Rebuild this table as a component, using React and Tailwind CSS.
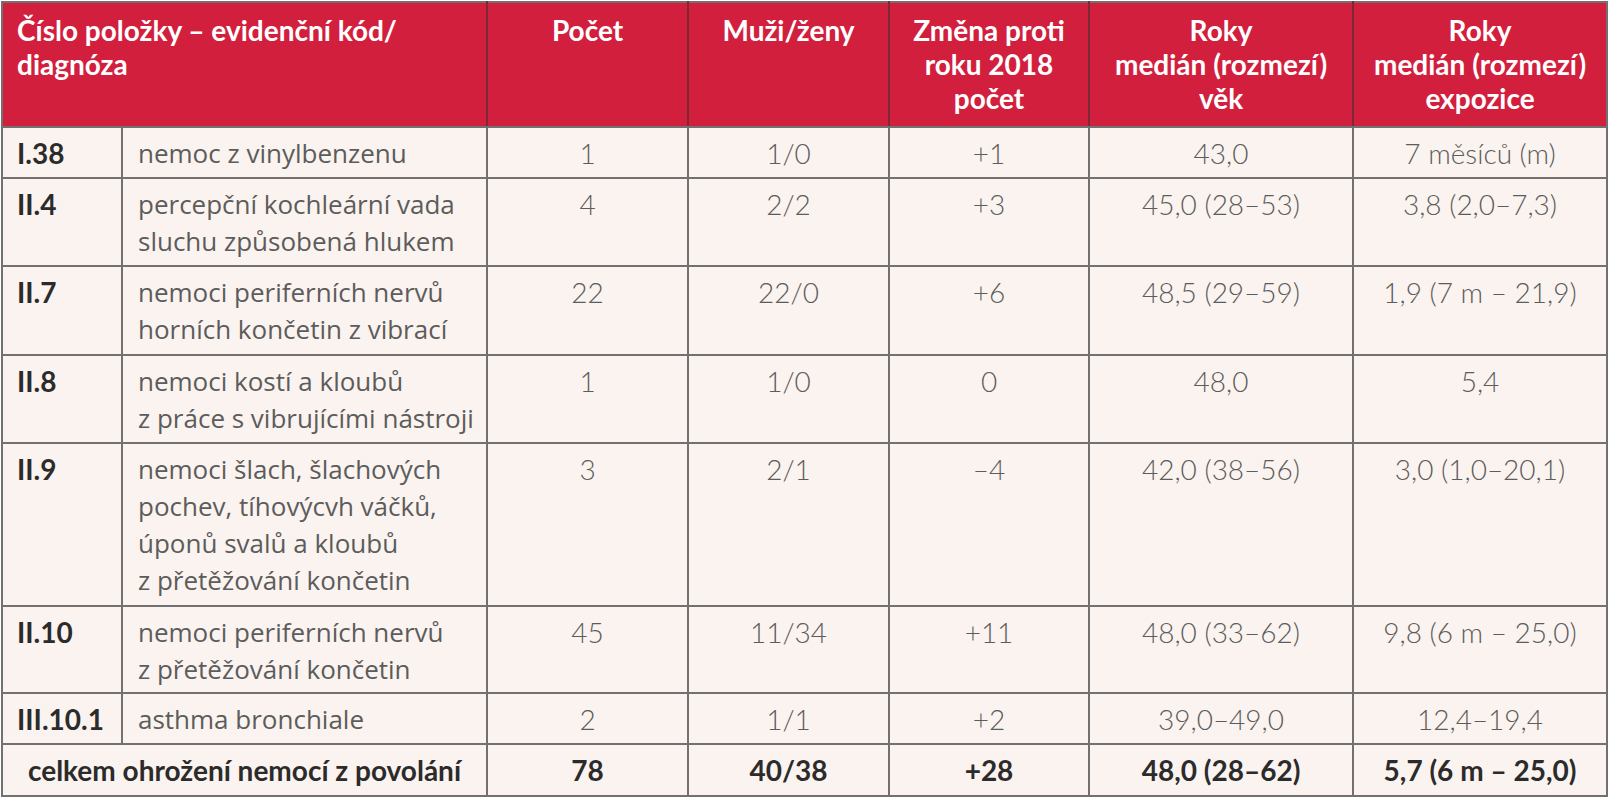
export default function App() {
  const rows = [
    { code: "I.38", name: ["nemoc z vinylbenzenu"], n: "1", mw: "1/0", ch: "+1", age: "43,0", exp: "7 měsíců (m)", h: "h-[51px]" },
    { code: "II.4", name: ["percepční kochleární vada", "sluchu způsobená hlukem"], n: "4", mw: "2/2", ch: "+3", age: "45,0 (28–53)", exp: "3,8 (2,0–7,3)", h: "h-[88px]" },
    { code: "II.7", name: ["nemoci periferních nervů", "horních končetin z vibrací"], n: "22", mw: "22/0", ch: "+6", age: "48,5 (29–59)", exp: "1,9 (7 m – 21,9)", h: "h-[89px]" },
    { code: "II.8", name: ["nemoci kostí a kloubů", "z práce s vibrujícími nástroji"], n: "1", mw: "1/0", ch: "0", age: "48,0", exp: "5,4", h: "h-[88px]" },
    { code: "II.9", name: ["nemoci šlach, šlachových", "pochev, tíhovýcvh váčků,", "úponů svalů a kloubů", "z přetěžování končetin"], n: "3", mw: "2/1", ch: "–4", age: "42,0 (38–56)", exp: "3,0 (1,0–20,1)", h: "h-[163px]" },
    { code: "II.10", name: ["nemoci periferních nervů", "z přetěžování končetin"], n: "45", mw: "11/34", ch: "+11", age: "48,0 (33–62)", exp: "9,8 (6 m – 25,0)", h: "h-[87px]" },
    { code: "III.10.1", name: ["asthma bronchiale"], n: "2", mw: "1/1", ch: "+2", age: "39,0–49,0", exp: "12,4–19,4", h: "h-[51px]" },
  ];
  const bd = "border-2 border-[#727070]";
  const hd = "border-2 border-[#7a2a35] border-b-[#727070] border-t-[#727070] align-top text-center px-1 pt-[10px]";
  const num = "border-2 border-[#727070] align-top text-center pt-[7px] leading-[37px] text-[28px] text-[#5c5c5c] font-light";
  return (
    <div className="w-[1611px] h-[800px] bg-white p-[1px]">
      <table
        className="table-fixed border-collapse w-[1605px] bg-[#fbf3ef]"
        style={{ fontFamily: '"Lato", "Open Sans", sans-serif' }}
      >
        <colgroup>
          <col className="w-[120px]" />
          <col className="w-[365px]" />
          <col className="w-[201px]" />
          <col className="w-[201px]" />
          <col className="w-[200px]" />
          <col className="w-[264px]" />
          <col className="w-[254px]" />
        </colgroup>
        <thead>
          <tr className="h-[125px] bg-[#d21f3d] text-white font-bold text-[28px] leading-[34px]">
            <th colSpan={2} className={`${hd} text-left pl-[14px] border-l-[#727070]`}>
              Číslo položky – evidenční kód/
              <br />
              diagnóza
            </th>
            <th className={hd}>Počet</th>
            <th className={hd}>Muži/ženy</th>
            <th className={hd}>
              Změna proti
              <br />
              roku 2018
              <br />
              počet
            </th>
            <th className={hd}>
              Roky
              <br />
              medián (rozmezí)
              <br />
              věk
            </th>
            <th className={`${hd} border-r-[#727070]`}>
              Roky
              <br />
              medián (rozmezí)
              <br />
              expozice
            </th>
          </tr>
        </thead>
        <tbody>
          {rows.map((r) => (
            <tr key={r.code} className={r.h}>
              <td className={`${bd} align-top pl-[14px] pt-[7px] leading-[37px] text-[28px] font-bold text-[#2b2b2b]`}>
                {r.code}
              </td>
              <td
                className={`${bd} align-top pl-[15px] pt-[7px] leading-[37px] text-[26px] text-[#5c5c5c]`}
                style={{ fontFamily: '"Open Sans", sans-serif' }}
              >
                {r.name.map((l, i) => (
                  <div key={i}>{l}</div>
                ))}
              </td>
              <td className={num}>{r.n}</td>
              <td className={num}>{r.mw}</td>
              <td className={num}>{r.ch}</td>
              <td className={num}>{r.age}</td>
              <td className={num}>{r.exp}</td>
            </tr>
          ))}
          <tr className="h-[52px] font-bold text-[28px] text-[#2b2b2b]">
            <td colSpan={2} className={`${bd} text-center align-middle`}>
              celkem ohrožení nemocí z povolání
            </td>
            <td className={`${bd} text-center align-middle`}>78</td>
            <td className={`${bd} text-center align-middle`}>40/38</td>
            <td className={`${bd} text-center align-middle`}>+28</td>
            <td className={`${bd} text-center align-middle`}>48,0 (28–62)</td>
            <td className={`${bd} text-center align-middle`}>5,7 (6 m – 25,0)</td>
          </tr>
        </tbody>
      </table>
    </div>
  );
}
